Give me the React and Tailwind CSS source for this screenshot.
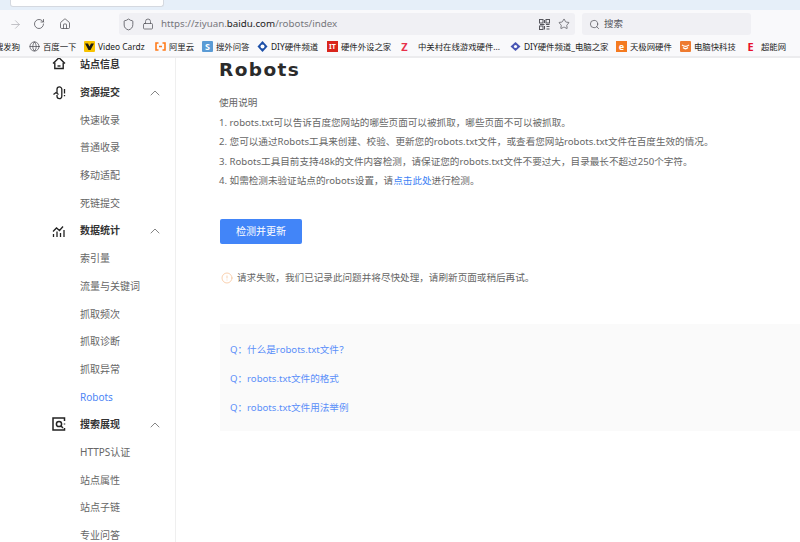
import { ArrowRight, RotateCw, Home, Shield, Lock, Star, Search, Globe, ChevronUp, CircleAlert } from "lucide-react";

const cjk = "font-['Noto_Sans','Noto_Sans_CJK_SC',sans-serif]";

const Fav = ({ className, children }) => (
  <span className={`flex h-[11px] w-[11px] shrink-0 items-center justify-center ${className}`}>
    {children}
  </span>
);

const QrIcon = () => (
  <svg width="11" height="11" viewBox="0 0 11 11" fill="none" stroke="#55555c" strokeWidth="1">
    <rect x="0.5" y="0.5" width="3.5" height="3.5" />
    <rect x="7" y="0.5" width="3.5" height="3.5" />
    <rect x="0.5" y="7" width="3.5" height="3.5" />
    <path d="M5.5 1v3M5.5 5.5H1M7 5.5h3.5M5.5 7v3.5M7.5 7.5h3M7.5 10h3" />
  </svg>
);

const bookmarks = [
  { label: "百度一下", w: "w-[55px]", icon: <Globe size={11} strokeWidth={1.5} color="#45454c" /> },
  {
    label: "Video Cardz",
    w: "w-[71px]",
    icon: (
      <Fav className="rounded-[1px] bg-[#f8c300]">
        <svg width="9" height="9" viewBox="0 0 9 9"><path d="M0 1.5h3l1.5 3 1.500-3h3L5.500 8h-2z" fill="#1a1a1a" /></svg>
      </Fav>
    ),
  },
  {
    label: "阿里云",
    w: "w-[47px]",
    icon: (
      <Fav className="">
        <svg width="11" height="9" viewBox="0 0 11 9" fill="none" stroke="#ff7a1a" strokeWidth="1.6">
          <path d="M3.500 1H1v7h2.500M7.500 1H10v7H7.500M4 4.500h3" />
        </svg>
      </Fav>
    ),
  },
  {
    label: "搜外问答",
    w: "w-[55px]",
    icon: <Fav className="rounded-[1px] bg-[#5b9bd5] text-[9px] font-bold text-white">S</Fav>,
  },
  {
    label: "DIY硬件频道",
    w: "w-[70px]",
    icon: (
      <Fav className="">
        <svg width="11" height="11" viewBox="0 0 11 11">
          <path d="M5.500 0 10.500 5.500 5.500 11 .5 5.500z" fill="#1c4fa8" />
          <circle cx="5.500" cy="5.500" r="2" fill="#fff" />
        </svg>
      </Fav>
    ),
  },
  {
    label: "硬件外设之家",
    w: "w-[72px]",
    icon: <Fav className="h-[9px] bg-[#d9251c] text-[7px] font-bold text-white">IT</Fav>,
  },
  {
    label: "中关村在线游戏硬件...",
    w: "w-[111px]",
    icon: (
      <Fav className="mr-[5px] w-[8px] text-[11px] leading-none font-bold text-[#e8304a]">Z</Fav>
    ),
  },
  {
    label: "DIY硬件频道_电脑之家",
    w: "w-[106px]",
    icon: (
      <Fav className="">
        <svg width="11" height="11" viewBox="0 0 11 11">
          <path d="M5.500 1 10.500 5.500 5.500 10 .5 5.500z" fill="#4a57b5" />
          <circle cx="5.500" cy="5.500" r="1.600" fill="#fff" />
        </svg>
      </Fav>
    ),
  },
  {
    label: "天极网硬件",
    w: "w-[64px]",
    icon: <Fav className="bg-[#f47a20] text-[9px] font-bold text-white">e</Fav>,
  },
  {
    label: "电脑快科技",
    w: "w-[65px]",
    icon: (
      <Fav className="rounded-[1px] bg-[#ee7b30]">
        <svg width="9" height="9" viewBox="0 0 9 9" fill="none" stroke="#fff" strokeWidth="1.2">
          <path d="M1 3c2 1.500 5 1.500 7 0M2 5.500c1.500 1.500 3.500 1.500 5 0" />
        </svg>
      </Fav>
    ),
  },
  {
    label: "超能网",
    w: "w-[44px]",
    icon: <Fav className="mr-[2px] w-[8px] text-[11px] leading-none font-bold text-[#e8102a]">E</Fav>,
  },
];

const sidebar = [
  { label: "站点信息", head: true, icon: "home" },
  { label: "资源提交", head: true, icon: "upload", open: true },
  { label: "快速收录" },
  { label: "普通收录" },
  { label: "移动适配" },
  { label: "死链提交" },
  { label: "数据统计", head: true, icon: "chart", open: true },
  { label: "索引量" },
  { label: "流量与关键词" },
  { label: "抓取频次" },
  { label: "抓取诊断" },
  { label: "抓取异常" },
  { label: "Robots", active: true },
  { label: "搜索展现", head: true, icon: "search", open: true },
  { label: "HTTPS认证" },
  { label: "站点属性" },
  { label: "站点子链" },
  { label: "专业问答" },
];

const SideIcon = ({ name }) => {
  if (name === "home")
    return (
      <svg width="14" height="14" viewBox="0 0 14 14" fill="none" stroke="#222" strokeWidth="1.4" className="mt-[-3px]">
        <path d="M1 7.500 7 1.800l6 5.700" />
        <path d="M2.800 6.500v6h8.400v-6" />
        <path d="M5.500 10h3" />
      </svg>
    );
  if (name === "upload")
    return (
      <svg width="14" height="14" viewBox="0 0 14 14" fill="none" stroke="#222" strokeWidth="1.3">
        <path d="M5 7V3.300a2.400 2.400 0 0 1 4.800 0v7a2.400 2.400 0 0 1-4.800 0V9" />
        <path d="M1.500 8.500 4 6.500l2.500 2" />
        <path d="M12.500 3v4.500M12.500 9v1.200" />
      </svg>
    );
  if (name === "chart")
    return (
      <svg width="14" height="14" viewBox="0 0 14 14" fill="none" stroke="#222" strokeWidth="1.3">
        <path d="M1 7.500 4.500 4l3 2.500L11 2.500" />
        <path d="M1.500 13v-3M5 13V7.500M8.500 13V9M12 13V6" />
      </svg>
    );
  return (
    <svg width="14" height="14" viewBox="0 0 14 14" fill="none" stroke="#222" strokeWidth="1.5" className="mt-[-2px]">
      <path d="M12.500 4V1H1v12h11.500V11" />
      <circle cx="7" cy="7" r="2.600" />
      <path d="m9 9 2 2M12.500 6.500v1" />
    </svg>
  );
};

const App = () => {
  return (
    <div className={`flex h-[542px] w-[800px] flex-col overflow-hidden bg-white ${cjk}`}>
      {/* Browser chrome */}
      <div className="h-[10px] shrink-0 bg-[#e6eff9]">
        <div className="ml-[10px] h-[7px] w-[154px] rounded-b-[3px] border border-t-0 border-[#d5d9e0] bg-white" />
      </div>
      <div className="flex h-[28px] shrink-0 items-center bg-[#f9f9fb] text-[#55555c]">
        <ArrowRight size={13} strokeWidth={1.5} color="#b5b5ba" className="ml-[9px]" />
        <RotateCw size={12} strokeWidth={1.6} className="ml-[11px]" />
        <Home size={12} strokeWidth={1.6} className="ml-[14px]" />
        <div className="ml-[48px] flex h-[22px] w-[456px] items-center rounded-[3px] bg-[#f0f0f4] pl-[3px] pr-[5px]">
          <Shield size={13} strokeWidth={1.5} />
          <Lock size={12} strokeWidth={1.5} className="ml-[7px]" />
          <span className="ml-[7px] text-[9.75px] text-[#77777c]">
            https://ziyuan.<span className="text-[#222]">baidu.com</span>/robots/index
          </span>
          <span className="ml-auto"><QrIcon /></span>
          <Star size={12} strokeWidth={1.5} className="ml-[8px]" />
        </div>
        <div className="ml-[7px] flex h-[22px] w-[169px] items-center rounded-[3px] bg-[#f0f0f4] pl-[7px] text-[9.5px] text-[#55555c]">
          <Search size={11} strokeWidth={1.6} />
          <span className="ml-[4px]">搜索</span>
        </div>
      </div>
      <div className="flex h-[20px] shrink-0 items-center overflow-hidden border-b-2 border-[#ececee] bg-[#f9f9fb] text-[8.4px] text-[#222]">
        <span className="ml-[-5px] w-[34px] shrink-0">搜发狗</span>
        {bookmarks.map((b) => (
          <div key={b.label} className={`flex shrink-0 items-center ${b.w}`}>
            {b.icon}
            <span className="ml-[3px] whitespace-nowrap">{b.label}</span>
          </div>
        ))}
      </div>

      {/* Page */}
      <div className="flex min-h-0 flex-1 overflow-hidden">
        {/* Sidebar */}
        <aside className="mt-[-7px] w-[176px] shrink-0 border-r border-[#efefef] bg-white">
          {sidebar.map((item) => (
            <div key={item.label} className="flex h-[27.7px] items-center text-[10px]">
              <span className="flex w-[80px] shrink-0 justify-end pr-[14px]">
                {item.head && <SideIcon name={item.icon} />}
              </span>
              <span
                className={
                  item.head
                    ? "font-bold text-[#333]"
                    : item.active
                      ? "text-[#4e86f5]"
                      : "text-[#666]"
                }
              >
                {item.label}
              </span>
              {item.open && (
                <ChevronUp size={16} strokeWidth={1.2} color="#666" className="ml-auto mr-[12px]" />
              )}
            </div>
          ))}
        </aside>

        {/* Main */}
        <main className="min-w-0 flex-1 pl-[43px] text-[9.6px] text-[#666]">
          <h1 className="font-['DejaVu_Sans',sans-serif] text-[18.5px] leading-[24px] font-bold tracking-[1.4px] text-[#2b2b2b]">
            Robots
          </h1>
          <div className="mt-[11px] leading-[19.5px] whitespace-nowrap">
            <p>使用说明</p>
            <p>1. robots.txt可以告诉百度您网站的哪些页面可以被抓取，哪些页面不可以被抓取。</p>
            <p>2. 您可以通过Robots工具来创建、校验、更新您的robots.txt文件，或查看您网站robots.txt文件在百度生效的情况。</p>
            <p>3. Robots工具目前支持48k的文件内容检测，请保证您的robots.txt文件不要过大，目录最长不超过250个字符。</p>
            <p>
              4. 如需检测未验证站点的robots设置，请<span className="text-[#3d7ff5]">点击此处</span>进行检测。
            </p>
          </div>
          <button className="mt-[28px] ml-[1px] flex h-[25px] w-[82px] items-center justify-center rounded-[2px] bg-[#4285f8] text-[10px] text-white">
            检测并更新
          </button>
          <div className="mt-[27px] flex items-center whitespace-nowrap">
            <CircleAlert size={12} strokeWidth={1.4} color="#f6bd8e" className="ml-[2px]" />
            <span className="ml-[4px]">请求失败，我们已记录此问题并将尽快处理，请刷新页面或稍后再试。</span>
          </div>
          <div className="mt-[39px] ml-[1px] flex h-[107px] flex-col justify-center gap-[15px] bg-[#fafafa] pl-[10px] pt-[4px] leading-[14px] text-[#5b8ff9]">
            <p>Q：什么是robots.txt文件？</p>
            <p>Q：robots.txt文件的格式</p>
            <p>Q：robots.txt文件用法举例</p>
          </div>
        </main>
      </div>
    </div>
  );
};

export default App;
